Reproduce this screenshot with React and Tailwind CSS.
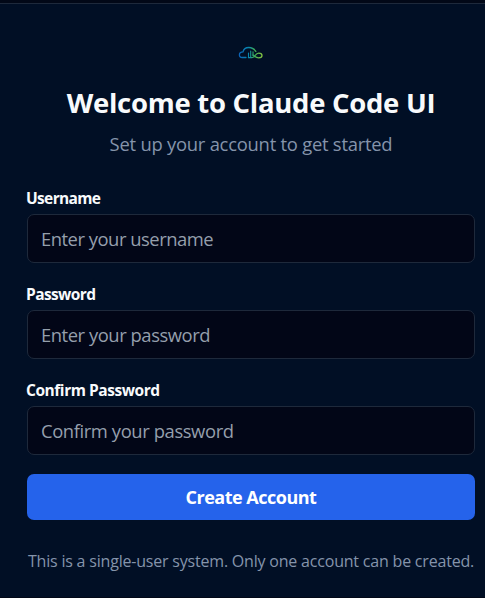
import { useState } from 'react'

const fields = [
  { name: 'username', label: 'Username', type: 'text', placeholder: 'Enter your username', labelClass: 'tracking-[-0.65px]', inputClass: 'tracking-[-0.48px]' },
  { name: 'password', label: 'Password', type: 'password', placeholder: 'Enter your password', labelClass: 'tracking-[-0.6px]', inputClass: 'tracking-[-0.45px]' },
  { name: 'confirmPassword', label: 'Confirm Password', type: 'password', placeholder: 'Confirm your password', labelClass: 'tracking-[-0.45px]', inputClass: 'tracking-[-0.4px]' },
]

function Logo() {
  return (
    <svg width="26" height="16" viewBox="0 0 26 16" fill="none" strokeLinecap="round" strokeLinejoin="round">
      <defs>
        <linearGradient id="logo" gradientUnits="userSpaceOnUse" x1="1" y1="0" x2="25" y2="0">
          <stop offset="0" stopColor="#0b62b8" />
          <stop offset="0.4" stopColor="#0888ae" />
          <stop offset="0.65" stopColor="#3fae55" />
          <stop offset="1" stopColor="#8cc63f" />
        </linearGradient>
      </defs>
      <g stroke="url(#logo)" strokeWidth="1.3">
        <path d="M8 12.500H4.200C2.200 12.500 1.400 11.300 1.400 9.900c0-1.800 1.400-2.900 3.600-3C5.600 4 7.600 2.500 10.800 2.500c3.200 0 5.400 1.300 7 3.900" />
        <path d="M10.500 8v4.500M12.700 6v6.500M15 6.800v3.700" strokeWidth="1.100" />
        <path d="M10.500 12.700h3.200c3 0 3.500-4.500 7-4.500 2 0 3.300 1 3.300 2.400s-1.300 2.200-3.300 2.200c-2.600 0-4-1-5.700-2.800" />
      </g>
    </svg>
  )
}

export default function App() {
  const [form, setForm] = useState({ username: '', password: '', confirmPassword: '' })

  return (
    <div className="h-screen overflow-hidden bg-[#020817] pt-[3px] pb-px font-['Open_Sans',sans-serif]">
      <div className="h-full border-t border-[#1e293b] bg-[#010f25] pl-[27px] pr-[10px] pt-[41px]">
        <div className="flex flex-col items-center text-center">
          <Logo />
          <h1 className="mt-[24px] whitespace-nowrap text-[27.5px] leading-9 font-bold tracking-[-0.28px] text-[#f8fafc]">Welcome to Claude Code UI</h1>
          <p className="mt-[9px] whitespace-nowrap text-[18.4px] leading-7 tracking-[-0.24px] text-[#8594ab]">Set up your account to get started</p>
        </div>

        <form onSubmit={e => e.preventDefault()} className="mt-7">
          {fields.map(f => (
            <div key={f.name} className="mb-[19px] h-[77px]">
              <label htmlFor={f.name} className={`-ml-px block h-7 whitespace-nowrap text-[15.5px] leading-6 font-bold text-[#f8fafc] ${f.labelClass}`}>{f.label}</label>
              <input
                id={f.name}
                type={f.type}
                placeholder={f.placeholder}
                value={form[f.name]}
                onChange={e => setForm({ ...form, [f.name]: e.target.value })}
                className={`block h-[49px] w-full rounded-[7px] border border-[#1e293b] bg-[#020617] pl-[13px] pr-[14px] text-[18.4px] text-[#f8fafc] outline-none placeholder:text-[#959fac] ${f.inputClass}`}
              />
            </div>
          ))}
          <button type="submit" className="h-[46px] w-full rounded-[7px] bg-[#2563eb] text-[18px] leading-7 font-bold tracking-[-0.5px] text-white">Create Account</button>
        </form>

        <p className="mt-[29px] whitespace-nowrap text-center text-[16px] leading-6 tracking-[-0.2px] text-[#8594ab]">This is a single-user system. Only one account can be created.</p>
      </div>
    </div>
  )
}
